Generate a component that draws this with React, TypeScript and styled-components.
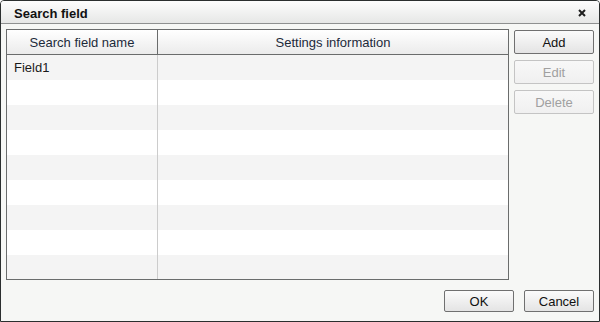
import styled, { createGlobalStyle, css } from "styled-components";

const GlobalStyle = createGlobalStyle`
  html, body {
    margin: 0;
    padding: 0;
    background: #ffffff;
  }
  body {
    font-family: "Liberation Sans", Arial, sans-serif;
    font-size: 13px;
    color: #1a1a1a;
  }
`;

const Dialog = styled.div`
  box-sizing: border-box;
  width: 600px;
  height: 322px;
  border: 1px solid #2b2f2f;
  border-radius: 4px 4px 0 0;
  display: flex;
  flex-direction: column;
  background: #f6f7f5;
  overflow: hidden;
`;

const TitleBar = styled.div`
  box-sizing: border-box;
  height: 23px;
  flex: 0 0 auto;
  display: flex;
  align-items: center;
  justify-content: space-between;
  padding: 2px 13px 0 13px;
  background: linear-gradient(#fdfdfd, #e6e7e6);
  border-bottom: 1px solid #8e9090;
`;

const Title = styled.div`
  font-weight: bold;
  font-size: 13px;
  color: #111;
`;

const Close = styled.svg`
  display: block;
  width: 8px;
  height: 8px;
`;

const Body = styled.div`
  flex: 1;
  display: flex;
  flex-direction: column;
  padding: 5px 5px 9px 5px;
`;

const Main = styled.div`
  display: flex;
  gap: 5px;
`;

const Table = styled.div`
  box-sizing: border-box;
  width: 503px;
  height: 251px;
  border: 1px solid #6a6c6c;
  background: #ffffff;
  display: flex;
  flex-direction: column;
  overflow: hidden;
`;

const HeaderRow = styled.div`
  display: grid;
  grid-template-columns: 151px 1fr;
  height: 25px;
  flex: 0 0 25px;
  box-sizing: border-box;
  border-bottom: 1px solid #6a6c6c;
  background: linear-gradient(#ffffff, #ebebeb);
`;

const HeaderCell = styled.div<{ $last?: boolean }>`
  display: flex;
  align-items: center;
  justify-content: center;
  color: #1c2a3a;
  ${(p) =>
    !p.$last &&
    css`
      border-right: 1px solid #6a6c6c;
    `}
`;

const Row = styled.div<{ $odd: boolean }>`
  display: grid;
  grid-template-columns: 151px 1fr;
  height: 25px;
  flex: 0 0 25px;
  background: ${(p) => (p.$odd ? "#f4f4f4" : "#ffffff")};
`;

const Cell = styled.div<{ $last?: boolean }>`
  display: flex;
  align-items: center;
  padding-left: 7px;
  color: #1a1a1a;
  ${(p) =>
    !p.$last &&
    css`
      border-right: 1px solid #cccccc;
    `}
`;

const SideButtons = styled.div`
  display: flex;
  flex-direction: column;
  gap: 6px;
  padding-top: 1px;
`;

const Button = styled.button<{ $width: number; $height: number }>`
  box-sizing: border-box;
  width: ${(p) => p.$width}px;
  height: ${(p) => p.$height}px;
  padding: 0;
  font-family: inherit;
  font-size: 13px;
  color: #111;
  border: 1px solid #707070;
  border-radius: 2px;
  background: linear-gradient(#fbfbfb, #e4e4e4);
  cursor: default;

  &:disabled {
    color: #a0a0a0;
    border-color: #c4c4c4;
    background: linear-gradient(#f8f8f8, #f0f0f0);
  }
`;

const Footer = styled.div`
  margin-top: auto;
  display: flex;
  justify-content: flex-end;
  gap: 10px;
`;

const rows = ["Field1", "", "", "", "", "", "", "", ""];

export default function App() {
  return (
    <>
      <GlobalStyle />
      <Dialog>
        <TitleBar>
          <Title>Search field</Title>
          <Close viewBox="0 0 8 8">
            <path d="M1 1 L7 7 M7 1 L1 7" stroke="#1e1e1e" strokeWidth="2" />
          </Close>
        </TitleBar>
        <Body>
          <Main>
            <Table>
              <HeaderRow>
                <HeaderCell>Search field name</HeaderCell>
                <HeaderCell $last>Settings information</HeaderCell>
              </HeaderRow>
              {rows.map((name, i) => (
                <Row key={i} $odd={i % 2 === 0}>
                  <Cell>{name}</Cell>
                  <Cell $last />
                </Row>
              ))}
            </Table>
            <SideButtons>
              <Button $width={80} $height={24}>Add</Button>
              <Button $width={80} $height={24} disabled>
                Edit
              </Button>
              <Button $width={80} $height={24} disabled>
                Delete
              </Button>
            </SideButtons>
          </Main>
          <Footer>
            <Button $width={70} $height={22}>OK</Button>
            <Button $width={70} $height={22}>Cancel</Button>
          </Footer>
        </Body>
      </Dialog>
    </>
  );
}
